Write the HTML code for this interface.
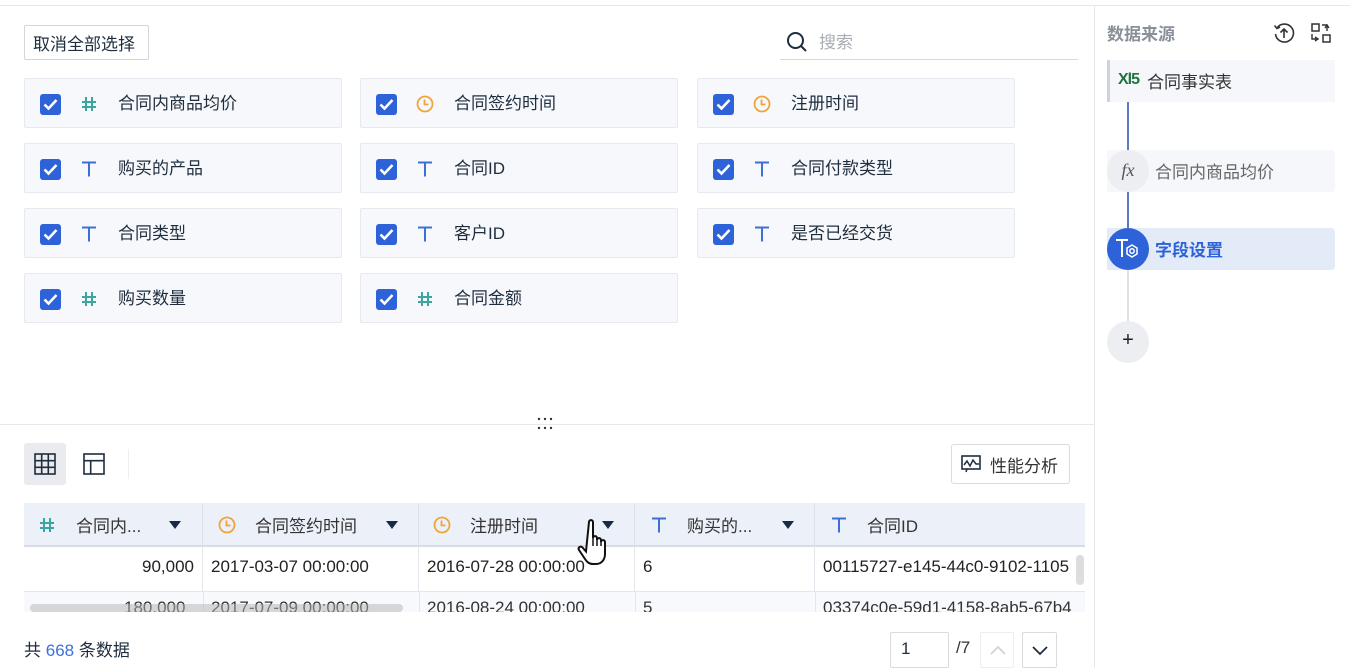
<!DOCTYPE html>
<html><head><meta charset="utf-8"><style>
*{box-sizing:border-box;margin:0;padding:0}
body{width:1350px;height:668px;overflow:hidden;background:#fff;font-family:"Liberation Sans","Noto Sans CJK SC",sans-serif;color:#1f2d3d;position:relative;font-size:16px}
.abs{position:absolute}
.card{position:absolute;width:318px;height:50px;background:#f6f8fc;border:1px solid #e6e9ef;border-radius:2px}
.cb{position:absolute;left:15px;top:15px;width:21px;height:21px;background:#2e62d9;border-radius:3px}
.cb svg{position:absolute;left:3px;top:4px}
.ic{position:absolute;left:55px;top:15px;width:18px;height:20px}
.lb{position:absolute;left:93px;top:10px;font-size:17px;color:#1f2d3d}
.th{position:absolute;top:503px;height:44px;background:#ecf0f8;border-right:1px solid #dde2ea;border-bottom:2px solid #d8dde5}
.th .t{position:absolute;top:9px;font-size:17px;color:#333}
.th .ic2{position:absolute;top:12px;width:18px;height:20px}
.th .ar{position:absolute;top:18px;width:0;height:0;border-left:6px solid transparent;border-right:6px solid transparent;border-top:8px solid #1b2a44}
.td{position:absolute;height:45px;border-right:1px solid #e3e6ec;border-bottom:1px solid #e3e6ec;font-size:17px;color:#222;padding-top:10px;padding-left:8px}
</style></head><body>
<svg width="0" height="0" style="position:absolute"><defs>
<symbol id="hash" viewBox="0 0 18 20"><path d="M6 3v14M12 3v14M2 8h14M2 13h14" stroke="#3aa6a0" stroke-width="2"/></symbol>
<symbol id="tt" viewBox="0 0 18 20"><path d="M2 3.5h14M9 3.5v14" stroke="#3d6fd8" stroke-width="2"/></symbol>
<symbol id="clk" viewBox="0 0 18 20"><circle cx="9" cy="10" r="7.5" fill="none" stroke="#f0a53c" stroke-width="1.8"/><path d="M8.5 5.5v5h4" fill="none" stroke="#f0a53c" stroke-width="1.8"/></symbol>
<symbol id="chk" viewBox="0 0 15 13"><path d="M1.5 6.5l4 4 8-8.5" fill="none" stroke="#fff" stroke-width="2.6"/></symbol>
</defs></svg>
<div class="abs" style="left:0;top:5px;width:1350px;height:1px;background:#e6e8ec"></div>
<div class="abs" style="left:1094px;top:5px;width:1px;height:663px;background:#e6e8ec"></div>

<div class="abs" style="left:24px;top:25px;width:125px;height:35px;border:1px solid #d3d6dc;border-radius:2px;font-size:17px;padding:4px 0 0 8px;color:#1f2d3d">取消全部选择</div>

<div class="abs" style="left:780px;top:26px;width:298px;height:34px;border-bottom:1px solid #d6d9df">
<svg class="abs" style="left:6px;top:5px" width="22" height="22" viewBox="0 0 22 22"><circle cx="9.5" cy="9.5" r="7.5" fill="none" stroke="#1f2d3d" stroke-width="2"/><path d="M15 15l5 5" stroke="#1f2d3d" stroke-width="2"/></svg>
<div class="abs" style="left:39px;top:2px;font-size:17px;color:#a8adb5">搜索</div></div>

<div class="card" style="left:24px;top:78px"><div class="cb"><svg width="15" height="13"><use href="#chk"/></svg></div><svg class="ic"><use href="#hash"/></svg><div class="lb">合同内商品均价</div></div>
<div class="card" style="left:360px;top:78px"><div class="cb"><svg width="15" height="13"><use href="#chk"/></svg></div><svg class="ic"><use href="#clk"/></svg><div class="lb">合同签约时间</div></div>
<div class="card" style="left:697px;top:78px"><div class="cb"><svg width="15" height="13"><use href="#chk"/></svg></div><svg class="ic"><use href="#clk"/></svg><div class="lb">注册时间</div></div>

<div class="card" style="left:24px;top:143px"><div class="cb"><svg width="15" height="13"><use href="#chk"/></svg></div><svg class="ic"><use href="#tt"/></svg><div class="lb">购买的产品</div></div>
<div class="card" style="left:360px;top:143px"><div class="cb"><svg width="15" height="13"><use href="#chk"/></svg></div><svg class="ic"><use href="#tt"/></svg><div class="lb">合同ID</div></div>
<div class="card" style="left:697px;top:143px"><div class="cb"><svg width="15" height="13"><use href="#chk"/></svg></div><svg class="ic"><use href="#tt"/></svg><div class="lb">合同付款类型</div></div>

<div class="card" style="left:24px;top:208px"><div class="cb"><svg width="15" height="13"><use href="#chk"/></svg></div><svg class="ic"><use href="#tt"/></svg><div class="lb">合同类型</div></div>
<div class="card" style="left:360px;top:208px"><div class="cb"><svg width="15" height="13"><use href="#chk"/></svg></div><svg class="ic"><use href="#tt"/></svg><div class="lb">客户ID</div></div>
<div class="card" style="left:697px;top:208px"><div class="cb"><svg width="15" height="13"><use href="#chk"/></svg></div><svg class="ic"><use href="#tt"/></svg><div class="lb">是否已经交货</div></div>

<div class="card" style="left:24px;top:273px"><div class="cb"><svg width="15" height="13"><use href="#chk"/></svg></div><svg class="ic"><use href="#hash"/></svg><div class="lb">购买数量</div></div>
<div class="card" style="left:360px;top:273px"><div class="cb"><svg width="15" height="13"><use href="#chk"/></svg></div><svg class="ic"><use href="#hash"/></svg><div class="lb">合同金额</div></div>

<div class="abs" style="left:0;top:424px;width:1094px;height:1px;background:#e6e8ec"></div>
<svg class="abs" style="left:536px;top:416px" width="20" height="16" viewBox="0 0 20 16"><g fill="#333"><circle cx="3" cy="3" r="1.2"/><circle cx="9" cy="3" r="1.2"/><circle cx="15" cy="3" r="1.2"/><circle cx="3" cy="12" r="1.2"/><circle cx="9" cy="12" r="1.2"/><circle cx="15" cy="12" r="1.2"/></g></svg>

<div class="abs" style="left:24px;top:443px;width:42px;height:42px;background:#e9ebef;border-radius:3px"></div>
<svg class="abs" style="left:34px;top:453px" width="22" height="22" viewBox="0 0 22 22"><rect x="1" y="1" width="20" height="20" fill="none" stroke="#1f2d3d" stroke-width="1.6"/><path d="M7.7 1v20M14.3 1v20M1 7.7h20M1 14.3h20" stroke="#1f2d3d" stroke-width="1.6"/></svg>
<svg class="abs" style="left:83px;top:453px" width="22" height="22" viewBox="0 0 22 22"><rect x="1" y="1" width="20" height="20" fill="none" stroke="#1f2d3d" stroke-width="1.6"/><path d="M1 7.7h20M7.7 7.7v13.3" stroke="#1f2d3d" stroke-width="1.6"/></svg>
<div class="abs" style="left:128px;top:449px;width:1px;height:30px;background:#eceef1"></div>

<div class="abs" style="left:951px;top:444px;width:119px;height:40px;border:1px solid #d8dbe0;border-radius:3px">
<svg class="abs" style="left:9px;top:9px" width="20" height="20" viewBox="0 0 20 20"><rect x="1" y="2" width="18" height="13" fill="none" stroke="#1f2d3d" stroke-width="1.6"/><path d="M3 11l3-4 3 5 3-6 3 4h3M6 15l-1 3" fill="none" stroke="#1f2d3d" stroke-width="1.5"/></svg>
<div class="abs" style="left:38px;top:7px;font-size:17px;color:#333">性能分析</div></div>

<div class="th" style="left:24px;width:179px"><svg class="ic2" style="left:14px"><use href="#hash"/></svg><span class="t" style="left:52px">合同内...</span><span class="ar" style="left:145px"></span></div>
<div class="th" style="left:203px;width:216px"><svg class="ic2" style="left:15px"><use href="#clk"/></svg><span class="t" style="left:52px">合同签约时间</span><span class="ar" style="left:183px"></span></div>
<div class="th" style="left:419px;width:216px"><svg class="ic2" style="left:14px"><use href="#clk"/></svg><span class="t" style="left:51px">注册时间</span><span class="ar" style="left:183px"></span></div>
<div class="th" style="left:635px;width:180px"><svg class="ic2" style="left:15px"><use href="#tt"/></svg><span class="t" style="left:52px">购买的...</span><span class="ar" style="left:147px"></span></div>
<div class="th" style="left:815px;width:270px;border-right:none"><svg class="ic2" style="left:15px"><use href="#tt"/></svg><span class="t" style="left:52px">合同ID</span></div>

<div class="td" style="left:24px;top:547px;width:179px;text-align:right;padding-right:8px">90,000</div>
<div class="td" style="left:203px;top:547px;width:216px">2017-03-07 00:00:00</div>
<div class="td" style="left:419px;top:547px;width:216px">2016-07-28 00:00:00</div>
<div class="td" style="left:635px;top:547px;width:180px">6</div>
<div class="td" style="left:815px;top:547px;width:270px;border-right:none;white-space:nowrap;overflow:hidden">00115727-e145-44c0-9102-1105</div>
<div class="abs" style="left:24px;top:592px;width:1061px;height:20px;overflow:hidden;background:#f7f9fc">
<div class="abs" style="left:0;top:0;width:1061px;height:20px;font-size:17px;color:#333">
<span class="abs" style="left:100px;top:6px">180,000</span><span class="abs" style="left:187px;top:6px">2017-07-09 00:00:00</span><span class="abs" style="left:403px;top:6px">2016-08-24 00:00:00</span><span class="abs" style="left:619px;top:6px">5</span><span class="abs" style="left:799px;top:6px;white-space:nowrap">03374c0e-59d1-4158-8ab5-67b4</span></div>
<div class="abs" style="left:179px;top:0;width:1px;height:20px;background:#e3e6ec"></div>
<div class="abs" style="left:395px;top:0;width:1px;height:20px;background:#e3e6ec"></div>
<div class="abs" style="left:611px;top:0;width:1px;height:20px;background:#e3e6ec"></div>
<div class="abs" style="left:791px;top:0;width:1px;height:20px;background:#e3e6ec"></div>
<div class="abs" style="left:6px;top:12px;width:373px;height:8px;background:rgba(180,180,180,.5);border-radius:4px"></div>
</div>
<div class="abs" style="left:1076px;top:555px;width:8px;height:30px;background:#ddd;border-radius:4px"></div>

<svg class="abs" style="left:576px;top:518px" width="40" height="52" viewBox="0 0 40 52"><path d="M13 4c0-2.5 4-2.5 4 0v16c0-2.5 4-2.5 4 0v2c0-2.5 4-2.5 4 0v2c0-2.5 4-2.5 4 0v12c0 5-3 10-9 10h-3c-4 0-6-2-8-5l-6-9c-1.5-2.5 1.5-4.5 3.5-2.5l3.5 4z" fill="#fff" stroke="#111" stroke-width="2"/><path d="M17 20v8M21 22v6M25 24v4" stroke="#111" stroke-width="1.5"/></svg>

<div class="abs" style="left:24px;top:636px;font-size:17px;color:#1f2d3d">共 <span style="color:#3d6fd8">668</span> 条数据</div>
<div class="abs" style="left:890px;top:632px;width:59px;height:36px;border:1px solid #d8dbe0;border-radius:2px;font-size:17px;padding:6px 0 0 10px">1</div>
<div class="abs" style="left:956px;top:638px;font-size:17px;color:#333">/7</div>
<div class="abs" style="left:980px;top:632px;width:34px;height:36px;border:1px solid #eceef1;border-radius:2px"><svg class="abs" style="left:8px;top:11px" width="18" height="12" viewBox="0 0 18 12"><path d="M2 10l7-7 7 7" fill="none" stroke="#cfd3d9" stroke-width="1.8"/></svg></div>
<div class="abs" style="left:1022px;top:632px;width:35px;height:36px;border:1px solid #d8dbe0;border-radius:2px"><svg class="abs" style="left:8px;top:12px" width="18" height="12" viewBox="0 0 18 12"><path d="M2 2l7 7 7-7" fill="none" stroke="#1f2d3d" stroke-width="1.8"/></svg></div>

<div class="abs" style="left:1107px;top:20px;font-size:17px;font-weight:bold;color:#8a9099">数据来源</div>
<svg class="abs" style="left:1273px;top:22px" width="22" height="22" viewBox="0 0 22 22"><path d="M4 6A9 9 0 1 1 2.5 12" fill="none" stroke="#333" stroke-width="1.6"/><path d="M1.5 3.5l2.5 3 3-1.5" fill="none" stroke="#333" stroke-width="1.6"/><path d="M11 16V7M7.5 10.5L11 7l3.5 3.5" fill="none" stroke="#333" stroke-width="1.6"/></svg>
<svg class="abs" style="left:1310px;top:22px" width="22" height="22" viewBox="0 0 22 22"><rect x="2" y="2" width="7" height="7" fill="none" stroke="#333" stroke-width="1.5"/><rect x="13" y="13" width="7" height="7" fill="none" stroke="#333" stroke-width="1.5"/><path d="M2 12v5h6M12 3h5v6M15 6l2-3 2 3M5 15l3 2-3 2" fill="none" stroke="#333" stroke-width="1.4"/></svg>

<div class="abs" style="left:1107px;top:60px;width:228px;height:42px;background:#f5f7fb;border-left:3px solid #cfd3d9"></div>
<div class="abs" style="left:1118px;top:70px;font-size:16px;font-weight:bold;color:#21733f;letter-spacing:-1px;line-height:20px">Xl5</div>
<div class="abs" style="left:1147px;top:68px;font-size:17px;color:#333">合同事实表</div>
<div class="abs" style="left:1127px;top:102px;width:2px;height:48px;background:#5c7ac4"></div>

<div class="abs" style="left:1107px;top:150px;width:228px;height:42px;background:#f5f7fb;border-radius:0 4px 4px 0"></div>
<div class="abs" style="left:1107px;top:150px;width:42px;height:42px;border-radius:21px;background:#eceef2;font-family:'Liberation Serif',serif;font-style:italic;font-size:18px;color:#555;text-align:center;padding-top:10px">fx</div>
<div class="abs" style="left:1155px;top:158px;font-size:17px;color:#666">合同内商品均价</div>
<div class="abs" style="left:1127px;top:192px;width:2px;height:36px;background:#5c7ac4"></div>

<div class="abs" style="left:1107px;top:228px;width:228px;height:42px;background:#e3ebf9;border-radius:0 4px 4px 0"></div>
<div class="abs" style="left:1107px;top:228px;width:42px;height:42px;border-radius:21px;background:#2e62d9"></div>
<svg class="abs" style="left:1115px;top:237px" width="26" height="24" viewBox="0 0 26 24"><path d="M1 3h12M7 3v17" stroke="#fff" stroke-width="2"/><path d="M17 8l5 3v6l-5 3-5-3v-6z" fill="none" stroke="#fff" stroke-width="1.5"/><circle cx="17" cy="14" r="2.2" fill="none" stroke="#fff" stroke-width="1.5"/></svg>
<div class="abs" style="left:1155px;top:236px;font-size:17px;font-weight:bold;color:#2e62d9">字段设置</div>
<div class="abs" style="left:1127px;top:270px;width:2px;height:52px;background:#dfe1e5"></div>

<div class="abs" style="left:1107px;top:321px;width:42px;height:42px;border-radius:21px;background:#eceef2;text-align:center;font-size:20px;padding-top:8px;color:#222">+</div>
</body></html>
